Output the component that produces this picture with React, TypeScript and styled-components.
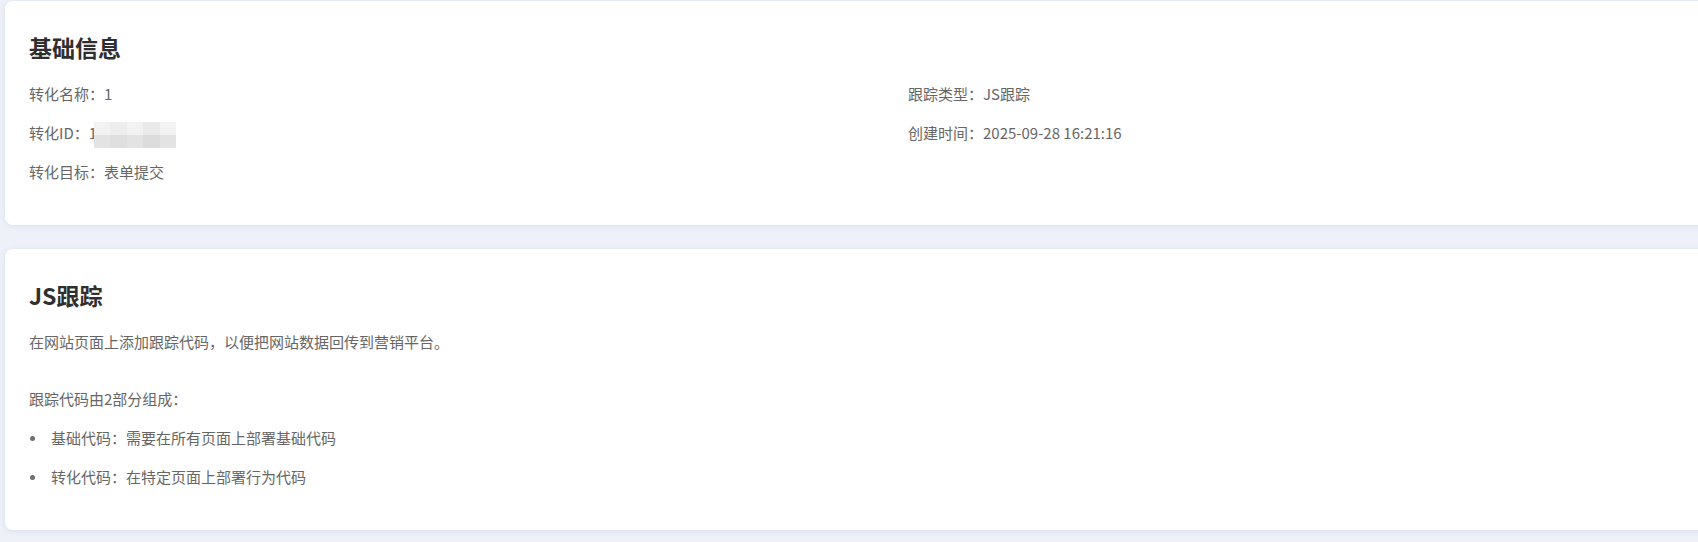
import React from 'react'
import styled, { createGlobalStyle } from 'styled-components'

const GlobalStyle = createGlobalStyle`
    html, body {
        margin: 0;
        padding: 0;
        background: #eef1f8;
        overflow: hidden;
    }
    body {
        font-family: "Noto Sans CJK SC", "Liberation Sans", sans-serif;
    }
`

// Layout
const Page = styled.div`
    display: flex;
    flex-direction: column;
    gap: 24px;
    width: 1810px;
    padding: 1px 0 14px 5px;
`

const Card = styled.section<{ $bottom: number }>`
    background: #ffffff;
    border-radius: 8px;
    box-shadow: 0 1px 6px rgba(120, 140, 190, 0.16);
    padding: 29px 24px ${(p) => p.$bottom}px;
`

const Title = styled.h2`
    margin: 0 0 19px;
    font-size: 23px;
    line-height: 34px;
    font-weight: 700;
    color: #2f2f2f;
`

const InfoGrid = styled.div`
    display: grid;
    grid-template-columns: 879px 1fr;
    row-gap: 17px;
`

const Field = styled.div`
    height: 22px;
    font-size: 15px;
    line-height: 22px;
    color: #666666;
    white-space: nowrap;
`

const Masked = styled.span`
    display: inline-block;
    vertical-align: middle;
    width: 82px;
    height: 26px;
    margin: -2px 0 -2px -3px;
    background:
        linear-gradient(90deg, transparent 0 20%, rgba(0,0,0,0.02) 20% 40%, transparent 40% 60%, rgba(0,0,0,0.03) 60% 80%, transparent 80%),
        linear-gradient(180deg, #f2f2f2 0 50%, #e3e3e3 50% 100%);
    filter: blur(0.6px);
`

const Paragraph = styled.p<{ $gap: number }>`
    margin: 0 0 ${(p) => p.$gap}px;
    font-size: 15px;
    line-height: 22px;
    color: #666666;
`

const List = styled.ul`
    margin: 0;
    padding: 0;
    list-style: none;
    display: flex;
    flex-direction: column;
    gap: 17px;
`

const Item = styled.li`
    display: flex;
    align-items: center;
    gap: 16px;
    padding-left: 1px;
    font-size: 15px;
    line-height: 22px;
    color: #666666;

    &::before {
        content: '';
        width: 5px;
        height: 5px;
        border-radius: 50%;
        background: #6e6e6e;
        flex-shrink: 0;
    }
`

const App: React.FC = (): JSX.Element => {
    return (
        <>
            <GlobalStyle />
            <Page>
                <Card $bottom={42}>
                    <Title>基础信息</Title>
                    <InfoGrid>
                        <Field>转化名称：1</Field>
                        <Field>跟踪类型：JS跟踪</Field>
                        <Field>
                            转化ID：1<Masked />
                        </Field>
                        <Field>创建时间：2025-09-28 16:21:16</Field>
                        <Field>转化目标：表单提交</Field>
                    </InfoGrid>
                </Card>
                <Card $bottom={42}>
                    <Title>JS跟踪</Title>
                    <Paragraph $gap={35}>在网站页面上添加跟踪代码，以便把网站数据回传到营销平台。</Paragraph>
                    <Paragraph $gap={17}>跟踪代码由2部分组成：</Paragraph>
                    <List>
                        <Item>基础代码：需要在所有页面上部署基础代码</Item>
                        <Item>转化代码：在特定页面上部署行为代码</Item>
                    </List>
                </Card>
            </Page>
        </>
    )
}

export default App
